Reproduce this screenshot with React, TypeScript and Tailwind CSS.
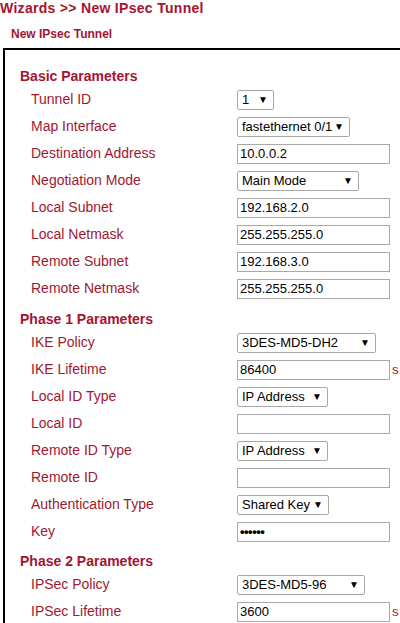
import React from 'react';

type Row = {
    label: string,
    kind: 'select' | 'input' | 'password',
    value?: string,
    width?: number,
    unit?: string
}

type Section = {
    title: string,
    gap: string,
    rows: Row[]
}

const sections: Section[] = [
    {
        title: 'Basic Parameters',
        gap: 'mt-0',
        rows: [
            {label: 'Tunnel ID', kind: 'select', value: '1', width: 37},
            {label: 'Map Interface', kind: 'select', value: 'fastethernet 0/1', width: 113},
            {label: 'Destination Address', kind: 'input', value: '10.0.0.2'},
            {label: 'Negotiation Mode', kind: 'select', value: 'Main Mode', width: 122},
            {label: 'Local Subnet', kind: 'input', value: '192.168.2.0'},
            {label: 'Local Netmask', kind: 'input', value: '255.255.255.0'},
            {label: 'Remote Subnet', kind: 'input', value: '192.168.3.0'},
            {label: 'Remote Netmask', kind: 'input', value: '255.255.255.0'},
        ]
    },
    {
        title: 'Phase 1 Parameters',
        gap: 'mt-[7px]',
        rows: [
            {label: 'IKE Policy', kind: 'select', value: '3DES-MD5-DH2', width: 139},
            {label: 'IKE Lifetime', kind: 'input', value: '86400', unit: 's'},
            {label: 'Local ID Type', kind: 'select', value: 'IP Address', width: 91},
            {label: 'Local ID', kind: 'input', value: ''},
            {label: 'Remote ID Type', kind: 'select', value: 'IP Address', width: 91},
            {label: 'Remote ID', kind: 'input', value: ''},
            {label: 'Authentication Type', kind: 'select', value: 'Shared Key', width: 92},
            {label: 'Key', kind: 'password', value: '••••••'},
        ]
    },
    {
        title: 'Phase 2 Parameters',
        gap: 'mt-[6px]',
        rows: [
            {label: 'IPSec Policy', kind: 'select', value: '3DES-MD5-96', width: 128},
            {label: 'IPSec Lifetime', kind: 'input', value: '3600', unit: 's'},
        ]
    },
];

const Control = ({row}: { row: Row }) => {
    if (row.kind === 'select') {
        return (
            <div
                className="flex h-[20px] items-center justify-between whitespace-nowrap rounded-[2px] border border-[#a8a8a8] bg-white pl-[4px] pr-[5px] text-[13px] leading-none text-black"
                style={{width: row.width}}
            >
                <span>{row.value}</span>
                <span className="text-[10px]">▼</span>
            </div>
        );
    }
    return (
        <div className="flex items-center">
            <div className="flex h-[20px] w-[153px] items-center border border-[#a9a9a9] bg-white pl-[2px] text-[13px] leading-none text-black">
                {row.kind === 'password'
                    ? <span className="text-[13px] font-bold tracking-[-0.5px]">{row.value}</span>
                    : <span>{row.value}</span>}
            </div>
            {row.unit && <span className="ml-[2px] text-[13px] text-[#a01830]">{row.unit}</span>}
        </div>
    );
};

const App = () => {
    return (
        <div className="h-[623px] w-[400px] overflow-hidden bg-white font-['Liberation_Sans',Arial,sans-serif] text-[#a01830]">
            <div className="text-[14px] font-bold leading-[17px] tracking-[0.3px] text-[#a51431]">Wizards &gt;&gt; New IPsec Tunnel</div>
            <div className="mt-[10px] pl-[11px] text-[12px] font-bold leading-[14px] text-[#a51431]">New IPsec Tunnel</div>
            <div className="ml-[3px] mt-[7px] w-[420px] border-l-2 border-t-2 border-black pl-[15px] pt-[16px]">
                {sections.map((section, i) =>
                    <div key={i} className={section.gap}>
                        <div className="h-[20px] text-[14px] font-bold leading-[20px] text-[#a51431]">{section.title}</div>
                        {section.rows.map((row, j) =>
                            <div key={j} className="flex h-[27px] items-center pl-[11px]">
                                <div className="w-[206px] text-[14px]">{row.label}</div>
                                <Control row={row}/>
                            </div>
                        )}
                    </div>
                )}
            </div>
        </div>
    );
};

export default App;
